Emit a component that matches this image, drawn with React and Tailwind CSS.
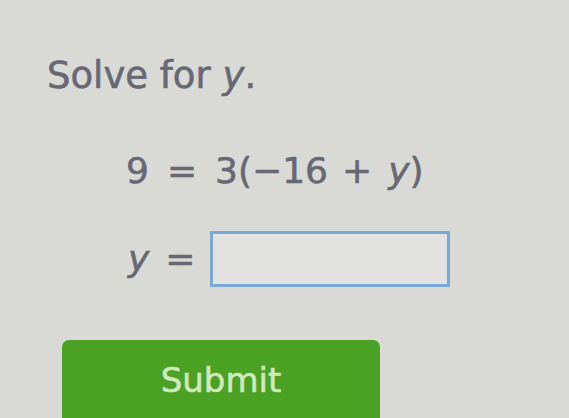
export default function App() {
  return (
    <div
      className="w-[569px] h-[418px] overflow-hidden bg-[#d9dad6] text-[#686874] [-webkit-text-stroke:0.6px_#686874]"
      style={{ fontFamily: '"DejaVu Sans", Verdana, sans-serif' }}
    >
      <div className="pl-[47px] pt-[54px]">
        <p className="text-[37px] leading-[44px]">
          Solve for <i>y</i>.
        </p>
      </div>

      <div className="pl-[126px] pt-[51px]">
        <p className="text-[36px] leading-[44px] flex items-center">
          <span>9</span>
          <span className="ml-[18px]">=</span>
          <span className="ml-[18px]">3(−16</span>
          <span className="ml-[14px]">+</span>
          <span className="ml-[16px]">
            <i>y</i>)
          </span>
        </p>
      </div>

      <div className="pl-[128px] pt-[38px] flex items-center gap-[14px]">
        <span className="text-[36px] leading-[44px] w-[68px] flex items-center">
          <i>y</i>
          <span className="ml-[16px]">=</span>
        </span>
        <div className="w-[240px] h-[56px] border-[3px] border-[#7aa8d4] bg-[#e2e3e0] [-webkit-text-stroke:0]" />
      </div>

      <div className="pl-[62px] pt-[53px]">
        <button className="w-[318px] h-[90px] rounded-[7px] bg-[#4aa123] text-[#cfe8bd] text-[34px] pb-[10px] flex items-center justify-center [-webkit-text-stroke:0.6px_#cfe8bd]">
          Submit
        </button>
      </div>
    </div>
  )
}
